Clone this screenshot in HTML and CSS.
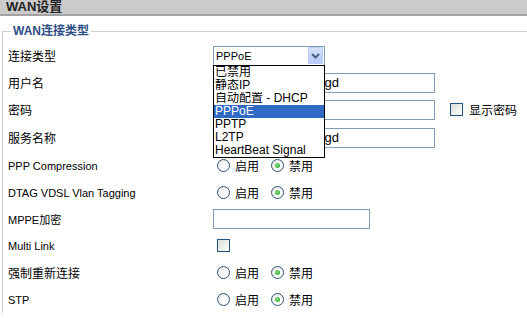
FILE: index.html
```html
<!DOCTYPE html>
<html lang="zh-CN">
<head>
    <meta charset="UTF-8">
    <title>WAN设置</title>
    <link rel="stylesheet" href="styles.css">
</head>
<body>
    <div class="page-title">WAN设置</div>
    <fieldset class="wan-box">
        <legend>WAN连接类型</legend>

        <div class="row">
            <label>连接类型</label>
            <div class="select-wrap">
                <div class="select">
                    <span class="select-value">PPPoE</span>
                    <span class="select-btn">
                        <svg width="9" height="6" viewBox="0 0 9 6"><path d="M1 1 L4.5 4.5 L8 1" fill="none" stroke="#4d6185" stroke-width="2"/></svg>
                    </span>
                </div>
                <ul class="select-list">
                    <li>已禁用</li>
                    <li>静态IP</li>
                    <li>自动配置 - DHCP</li>
                    <li class="active">PPPoE</li>
                    <li>PPTP</li>
                    <li>L2TP</li>
                    <li>HeartBeat Signal</li>
                </ul>
            </div>
        </div>

        <div class="row">
            <label>用户名</label>
            <input type="text" class="field" value="075512345678901gd">
        </div>

        <div class="row">
            <label>密码</label>
            <div class="inline">
                <input type="text" class="field" value="">
                <span class="check show-pass"></span>
                <span class="opt-text">显示密码</span>
            </div>
        </div>

        <div class="row row-tall">
            <label>服务名称</label>
            <input type="text" class="field" value="075512345678901gd">
        </div>

        <div class="row">
            <label class="en">PPP Compression</label>
            <div class="inline">
                <span class="radio"></span><span class="opt-text">启用</span>
                <span class="radio checked"></span><span class="opt-text">禁用</span>
            </div>
        </div>

        <div class="row">
            <label class="en">DTAG VDSL Vlan Tagging</label>
            <div class="inline">
                <span class="radio"></span><span class="opt-text">启用</span>
                <span class="radio checked"></span><span class="opt-text">禁用</span>
            </div>
        </div>

        <div class="row row-short">
            <label class="en">MPPE加密</label>
            <input type="text" class="field field-short" value="">
        </div>

        <div class="row">
            <label class="en">Multi Link</label>
            <div class="inline">
                <span class="check"></span>
            </div>
        </div>

        <div class="row">
            <label>强制重新连接</label>
            <div class="inline">
                <span class="radio"></span><span class="opt-text">启用</span>
                <span class="radio checked"></span><span class="opt-text">禁用</span>
            </div>
        </div>

        <div class="row">
            <label class="en">STP</label>
            <div class="inline">
                <span class="radio"></span><span class="opt-text">启用</span>
                <span class="radio checked"></span><span class="opt-text">禁用</span>
            </div>
        </div>
    </fieldset>
</body>
</html>
```

FILE: styles.css
```css
html, body {
    overflow: hidden;
}
body {
    margin: 0;
    padding: 0;
    background: #fff;
    color: #000;
    font-family: "Liberation Sans", "Noto Sans CJK SC", sans-serif;
}
.page-title {
    height: 14px;
    line-height: 13px;
    padding-left: 6px;
    background: #cbcbcb;
    border-bottom: 2px solid #a3a3a3;
    font-size: 13px;
    font-weight: bold;
    color: #222;
    overflow: hidden;
}
.wan-box {
    margin: 8px -8px 0 2px;
    padding: 4px 0 0 5px;
    border: 1px solid #cfcfcf;
    border-bottom: none;
}
.wan-box legend {
    margin-left: 3px;
    padding: 0 2px;
    line-height: 14px;
    font-size: 12px;
    font-weight: bold;
    color: #2d4f86;
}
.row {
    display: grid;
    grid-template-columns: 205px auto;
    align-items: center;
    height: 27px;
}
.row-tall {
    height: 29px;
}
.row-short {
    height: 26px;
}
.row label {
    font-size: 12px;
}
.row label.en {
    font-size: 11px;
}
.inline {
    display: flex;
    align-items: center;
}
.field {
    box-sizing: border-box;
    width: 222px;
    height: 20px;
    margin: 0;
    padding: 0 2px;
    border: 1px solid #7f9db9;
    font-family: inherit;
    font-size: 13px;
    color: #000;
    outline: none;
}
.field-short {
    width: 157px;
}
.select-wrap {
    position: relative;
    width: 112px;
}
.select {
    box-sizing: border-box;
    display: flex;
    align-items: center;
    justify-content: space-between;
    height: 20px;
    border: 1px solid #7f9db9;
    padding: 0 1px 0 2px;
    font-size: 11px;
}
.select-btn {
    box-sizing: border-box;
    display: flex;
    align-items: center;
    justify-content: center;
    width: 15px;
    height: 17px;
    background: linear-gradient(#d4e0fd, #b5c9f6);
    border: 1px solid #b9cdf7;
    border-radius: 1px;
}
.select-list {
    position: absolute;
    top: 19px;
    left: 0;
    z-index: 2;
    box-sizing: border-box;
    width: 112px;
    margin: 0;
    padding: 0;
    list-style: none;
    background: #fff;
    border: 1px solid #000;
}
.select-list li {
    height: 13px;
    line-height: 13px;
    padding-left: 1px;
    font-size: 12px;
    white-space: nowrap;
    overflow: hidden;
}
.select-list li.active {
    background: #316ac5;
    color: #fff;
}
.radio {
    box-sizing: border-box;
    width: 13px;
    height: 13px;
    margin: 0 5px 0 4px;
    border: 1px solid #2f5478;
    border-radius: 50%;
    background: radial-gradient(circle at 65% 65%, #fff 30%, #dcdcd6 100%);
    position: relative;
}
.radio.checked::after {
    content: "";
    position: absolute;
    left: 3px;
    top: 3px;
    width: 5px;
    height: 5px;
    border-radius: 50%;
    background: radial-gradient(circle at 40% 40%, #7fe07f, #21a121);
}
.radio + .opt-text {
    margin-right: 8px;
}
.opt-text {
    font-size: 12px;
}
.check {
    box-sizing: border-box;
    width: 13px;
    height: 13px;
    margin-left: 4px;
    border: 1px solid #1c5180;
    background: linear-gradient(135deg, #dcdcd7, #fff);
}
.show-pass {
    margin: 0 6px 0 15px;
}
```
